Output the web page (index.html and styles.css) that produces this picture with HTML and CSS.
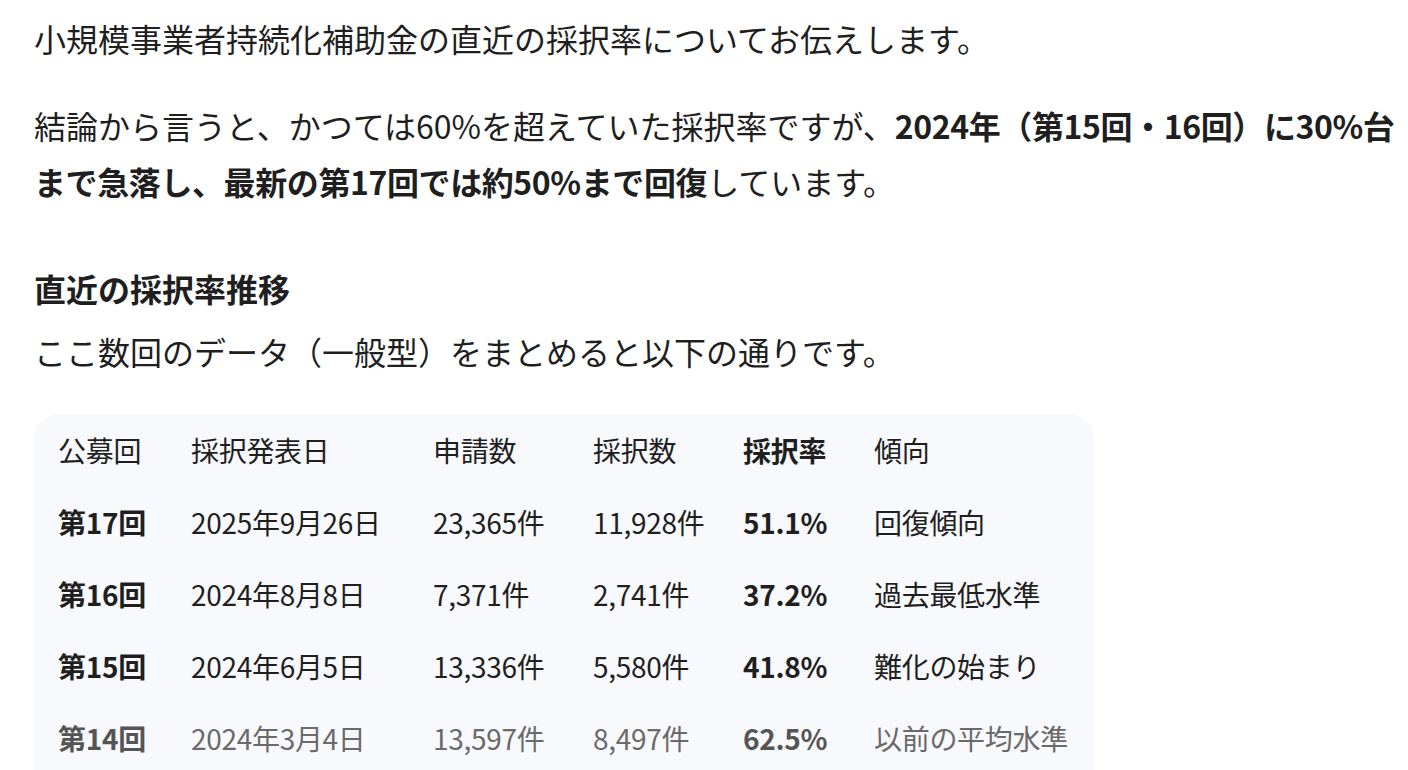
FILE: index.html
```html
<!DOCTYPE html>
<html lang="ja">
<head>
<meta charset="utf-8">
<link rel="stylesheet" href="styles.css">
</head>
<body>
<main class="answer">
  <p class="para first">小規模事業者持続化補助金の直近の採択率についてお伝えします。</p>
  <p class="para">結論から言うと、かつては60%を超えていた採択率ですが、<strong>2024年（第15回・16回）に30%台まで急落し、最新の第17回では約50%まで回復</strong>しています。</p>
  <h3 class="heading">直近の採択率推移</h3>
  <p class="para lead">ここ数回のデータ（一般型）をまとめると以下の通りです。</p>
  <div class="table-wrap">
    <table class="data">
      <colgroup>
        <col class="c1"><col class="c2"><col class="c3"><col class="c4"><col class="c5"><col class="c6">
      </colgroup>
      <thead>
        <tr><th>公募回</th><th>採択発表日</th><th>申請数</th><th>採択数</th><th class="b">採択率</th><th>傾向</th></tr>
      </thead>
      <tbody>
        <tr><td class="b">第17回</td><td>2025年9月26日</td><td>23,365件</td><td>11,928件</td><td class="b">51.1%</td><td>回復傾向</td></tr>
        <tr><td class="b">第16回</td><td>2024年8月8日</td><td>7,371件</td><td>2,741件</td><td class="b">37.2%</td><td>過去最低水準</td></tr>
        <tr><td class="b">第15回</td><td>2024年6月5日</td><td>13,336件</td><td>5,580件</td><td class="b">41.8%</td><td>難化の始まり</td></tr>
        <tr class="fade"><td class="b">第14回</td><td>2024年3月4日</td><td>13,597件</td><td>8,497件</td><td class="b">62.5%</td><td>以前の平均水準</td></tr>
      </tbody>
    </table>
  </div>
</main>
</body>
</html>
```

FILE: styles.css
```css
html, body {
  margin: 0;
  padding: 0;
  background: #ffffff;
}
body {
  font-family: "Noto Sans CJK JP", "Noto Sans", sans-serif;
  color: #1f1f1f;
  overflow: hidden;
}
.answer {
  padding: 10px 0 0 34px;
}
.para {
  margin: 0 0 31px 0;
  font-size: 32px;
  line-height: 56px;
}
.para strong {
  font-weight: 700;
  letter-spacing: -0.4px;
}
.heading {
  margin: 59px 0 0 0;
  font-size: 32px;
  line-height: 40px;
  font-weight: 700;
}
.para.lead {
  margin-top: 15px;
  margin-bottom: 0;
}
.table-wrap {
  margin-top: 35px;
  width: 1060px;
  background: #f8f9fc;
  border-radius: 24px 24px 0 0;
}
.data {
  width: 1060px;
  border-collapse: collapse;
  table-layout: fixed;
  font-size: 28px;
}
.data .c1 { width: 133px; }
.data .c2 { width: 242px; }
.data .c3 { width: 160px; }
.data .c4 { width: 150px; }
.data .c5 { width: 131px; }
.data .c6 { width: 244px; }
.data th,
.data td {
  height: 72px;
  padding: 0 0 0 24px;
  text-align: left;
  vertical-align: middle;
  font-weight: 400;
  white-space: nowrap;
  line-height: 40px;
  letter-spacing: -0.3px;
}
.data .b {
  font-weight: 700;
}
.data tr.fade td {
  color: #6a6a6a;
}
.data tr.fade td.b {
  color: #555555;
}
```
